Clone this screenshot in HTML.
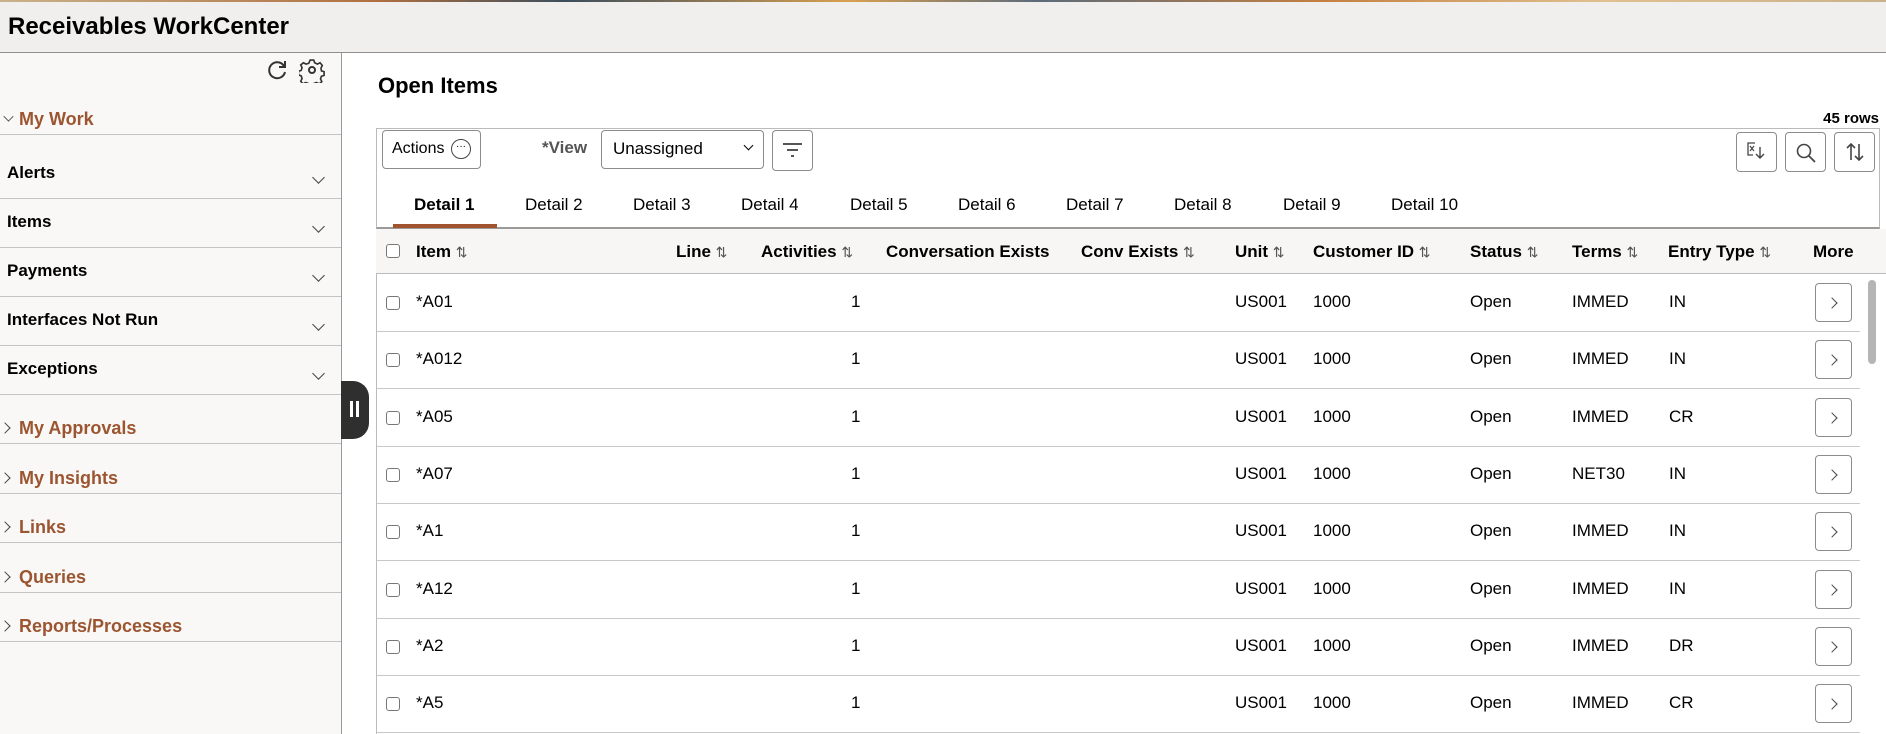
<!DOCTYPE html>
<html><head><meta charset="utf-8"><style>
*{box-sizing:border-box;margin:0;padding:0}
body{width:1886px;height:734px;overflow:hidden;background:#fff;font-family:"Liberation Sans",Arial,sans-serif;color:#000;position:relative}
.abs{position:absolute}
.hdr{left:0;top:0;width:1886px;height:53px;background:#f0efee;border-bottom:1px solid #8f8f8f}
.stripe{left:0;top:0;width:1886px;height:2px;background:linear-gradient(90deg,#c9b28a,#b07040 20%,#3c4d5c 30%,#d9a050 45%,#5b6b7b 55%,#c48040 70%,#e0c090 85%,#c9b28a)}
.hdr h1{position:absolute;left:8px;top:13px;font-size:24px;font-weight:bold}
.left{left:0;top:53px;width:342px;height:681px;background:#f9f8f7;border-right:1px solid #999}
.sep{left:0;width:341px;height:1px;background:#c4c4c4}
.nav{left:7px;font-size:17px;font-weight:bold}
.sec{left:19px;font-size:18px;font-weight:bold;color:#9b5530}
.chev{width:9px;height:9px;border-right:1.6px solid #444;border-bottom:1.6px solid #444;transform:rotate(45deg)}
.chr{width:8px;height:8px;border-right:1.5px solid #444;border-top:1.5px solid #444;transform:rotate(45deg)}
.btn{border:1px solid #8c8c8c;border-radius:4px;background:#fff}
.tab{top:195px;font-size:17px}
.th{top:242px;font-size:17px;font-weight:bold}
.cb{width:14px;height:14px;border:1px solid #777;border-radius:3px;background:#fff}
.td{font-size:17px}
.arr{font-weight:normal;color:#555;font-size:14px}
</style></head><body>
<div class="abs hdr"><h1>Receivables WorkCenter</h1></div>
<div class="abs stripe"></div>
<div class="abs left"></div>
<svg class="abs" style="left:265px;top:58px" width="24" height="24" viewBox="0 0 24 24"><path d="M19 8 A8 8 0 1 0 20 14" fill="none" stroke="#333" stroke-width="2"/><path d="M20 3 L20 9 L14 9" fill="none" stroke="#333" stroke-width="2"/></svg>
<svg class="abs" style="left:299px;top:57px" width="26" height="26" viewBox="0 0 26 26"><circle cx="13" cy="13" r="3" fill="none" stroke="#333" stroke-width="2"/><path d="M11 2h4l1 3 3 1.5 3-1.5 2.5 3-1.5 3 .5 3 3 1-0 4-3 1-1 3 1.5 3-3 2.5-3-1.5-3 1-1 3h-4l-1-3-3-1-3 1.5-2.5-3 1.5-3-1-3-3-1v-4l3-1 1-3-1.5-3 3-2.5 3 1.5 3-1z" fill="none" stroke="#333" stroke-width="1.8" transform="scale(0.9) translate(1.4 1.4)"/></svg>
<div class="abs chev" style="left:4px;top:112px;transform:rotate(45deg) scale(.8)"></div>
<div class="abs sec" style="top:109px">My Work</div>
<div class="abs sep" style="top:134px"></div>
<div class="abs nav" style="top:163px">Alerts</div><div class="abs chev" style="left:314px;top:173px"></div>
<div class="abs sep" style="top:198px"></div>
<div class="abs nav" style="top:212px">Items</div><div class="abs chev" style="left:314px;top:222px"></div>
<div class="abs sep" style="top:247px"></div>
<div class="abs nav" style="top:261px">Payments</div><div class="abs chev" style="left:314px;top:271px"></div>
<div class="abs sep" style="top:296px"></div>
<div class="abs nav" style="top:310px">Interfaces Not Run</div><div class="abs chev" style="left:314px;top:320px"></div>
<div class="abs sep" style="top:345px"></div>
<div class="abs nav" style="top:359px">Exceptions</div><div class="abs chev" style="left:314px;top:369px"></div>
<div class="abs sep" style="top:394px"></div>
<div class="abs chr" style="left:1px;top:424px"></div><div class="abs sec" style="top:418px">My Approvals</div>
<div class="abs sep" style="top:443px"></div>
<div class="abs chr" style="left:1px;top:474px"></div><div class="abs sec" style="top:468px">My Insights</div>
<div class="abs sep" style="top:493px"></div>
<div class="abs chr" style="left:1px;top:523px"></div><div class="abs sec" style="top:517px">Links</div>
<div class="abs sep" style="top:542px"></div>
<div class="abs chr" style="left:1px;top:573px"></div><div class="abs sec" style="top:567px">Queries</div>
<div class="abs sep" style="top:592px"></div>
<div class="abs chr" style="left:1px;top:622px"></div><div class="abs sec" style="top:616px">Reports/Processes</div>
<div class="abs sep" style="top:641px"></div>
<div class="abs" style="left:341px;top:381px;width:28px;height:58px;background:#2f2f2f;border-radius:0 16px 16px 0"></div>
<div class="abs" style="left:350px;top:401px;width:3px;height:16px;background:#fff"></div>
<div class="abs" style="left:356px;top:401px;width:3px;height:16px;background:#fff"></div>

<div class="abs" style="left:378px;top:73px;font-size:22px;font-weight:bold">Open Items</div>
<div class="abs" style="right:7px;top:110px;font-size:15px;font-weight:bold">45 rows</div>
<div class="abs" style="left:376px;top:128px;width:1504px;height:101px;border:1px solid #bbb;border-bottom:2px solid #9a9a9a"></div>
<div class="abs btn" style="left:382px;top:130px;width:99px;height:39px"></div>
<div class="abs" style="left:392px;top:140px;font-size:16px">Actions</div>
<div class="abs" style="left:451px;top:139px;width:20px;height:20px;border:1px solid #444;border-radius:50%;font-size:10px;text-align:center;line-height:14px">···</div>
<div class="abs" style="left:542px;top:138px;font-size:17px;font-weight:bold;color:#555">*View</div>
<div class="abs btn" style="left:601px;top:130px;width:163px;height:39px"></div>
<div class="abs" style="left:613px;top:139px;font-size:17px">Unassigned</div>
<div class="abs chev" style="left:745px;top:142px;width:7px;height:7px;border-width:1.8px;border-color:#000"></div>
<div class="abs btn" style="left:772px;top:130px;width:41px;height:41px"></div>
<div class="abs" style="left:783px;top:143px;width:19px;height:1.5px;background:#555"></div>
<div class="abs" style="left:787px;top:149px;width:11px;height:1.5px;background:#555"></div>
<div class="abs" style="left:791px;top:155px;width:3px;height:1.5px;background:#555"></div>
<div class="abs btn" style="left:1736px;top:132px;width:41px;height:40px"></div>
<svg class="abs" style="left:1745px;top:140px" width="22" height="22" viewBox="0 0 22 22"><path d="M10 3H3v12h5" fill="none" stroke="#444" stroke-width="1.3"/><path d="M5 6l4 5M9 6l-4 5" stroke="#444" stroke-width="1.2"/><path d="M15 7v11M11 14l4 4 4-4" fill="none" stroke="#444" stroke-width="1.4"/></svg>
<div class="abs btn" style="left:1785px;top:132px;width:41px;height:40px"></div>
<svg class="abs" style="left:1795px;top:142px" width="22" height="22" viewBox="0 0 22 22"><circle cx="9" cy="9" r="6.5" fill="none" stroke="#444" stroke-width="1.6"/><path d="M14 14l6 6" stroke="#444" stroke-width="1.8"/></svg>
<div class="abs btn" style="left:1834px;top:132px;width:41px;height:40px"></div>
<svg class="abs" style="left:1844px;top:141px" width="22" height="22" viewBox="0 0 22 22"><path d="M7 19V3M3 7l4-4 4 4M15 3v16M11 15l4 4 4-4" fill="none" stroke="#444" stroke-width="1.6"/></svg>

<div class="abs tab" style="left:414px;font-weight:bold">Detail 1</div>
<div class="abs" style="left:393px;top:224px;width:104px;height:4px;background:#a0532d"></div>
<div class="abs tab" style="left:525px">Detail 2</div>
<div class="abs tab" style="left:633px">Detail 3</div>
<div class="abs tab" style="left:741px">Detail 4</div>
<div class="abs tab" style="left:850px">Detail 5</div>
<div class="abs tab" style="left:958px">Detail 6</div>
<div class="abs tab" style="left:1066px">Detail 7</div>
<div class="abs tab" style="left:1174px">Detail 8</div>
<div class="abs tab" style="left:1283px">Detail 9</div>
<div class="abs tab" style="left:1391px">Detail 10</div>

<div class="abs" style="left:376px;top:229px;width:1510px;height:45px;background:#f7f6f4;border-bottom:1px solid #bbb"></div>
<div class="abs cb" style="left:386px;top:244px"></div>
<div class="abs th" style="left:416px">Item <span class="arr">⇅</span></div>
<div class="abs th" style="left:676px">Line <span class="arr">⇅</span></div>
<div class="abs th" style="left:761px">Activities <span class="arr">⇅</span></div>
<div class="abs th" style="left:886px">Conversation Exists</div>
<div class="abs th" style="left:1081px">Conv Exists <span class="arr">⇅</span></div>
<div class="abs th" style="left:1235px">Unit <span class="arr">⇅</span></div>
<div class="abs th" style="left:1313px">Customer ID <span class="arr">⇅</span></div>
<div class="abs th" style="left:1470px">Status <span class="arr">⇅</span></div>
<div class="abs th" style="left:1572px">Terms <span class="arr">⇅</span></div>
<div class="abs th" style="left:1668px">Entry Type <span class="arr">⇅</span></div>
<div class="abs th" style="left:1813px">More</div>
<div class="abs" style="left:376px;top:274px;width:1px;height:460px;background:#bbb"></div>
<div class="abs" style="left:1868px;top:280px;width:8px;height:84px;background:#b5b5b5;border-radius:4px"></div>

<div id="rows"></div>
<script>
var d=[["*A01","IMMED","IN"],["*A012","IMMED","IN"],["*A05","IMMED","CR"],["*A07","NET30","IN"],["*A1","IMMED","IN"],["*A12","IMMED","IN"],["*A2","IMMED","DR"],["*A5","IMMED","CR"]];
var h="";for(var i=0;i<8;i++){var t=274+i*57.3,y=t+18;
h+='<div class="abs" style="left:377px;top:'+(t+57)+'px;width:1483px;height:1px;background:#c8c8c8"></div>';
h+='<div class="abs cb" style="left:386px;top:'+(y+4)+'px"></div>';
h+='<div class="abs td" style="left:416px;top:'+y+'px">'+d[i][0]+'</div>';
h+='<div class="abs td" style="left:851px;top:'+y+'px">1</div>';
h+='<div class="abs td" style="left:1235px;top:'+y+'px">US001</div>';
h+='<div class="abs td" style="left:1313px;top:'+y+'px">1000</div>';
h+='<div class="abs td" style="left:1470px;top:'+y+'px">Open</div>';
h+='<div class="abs td" style="left:1572px;top:'+y+'px">'+d[i][1]+'</div>';
h+='<div class="abs td" style="left:1669px;top:'+y+'px">'+d[i][2]+'</div>';
h+='<div class="abs btn" style="left:1815px;top:'+(t+9)+'px;width:37px;height:39px"></div>';
h+='<div class="abs chr" style="left:1828px;top:'+(t+25)+'px;width:8px;height:8px;border-width:1.3px"></div>';}
document.getElementById("rows").innerHTML=h;
</script>
</body></html>
